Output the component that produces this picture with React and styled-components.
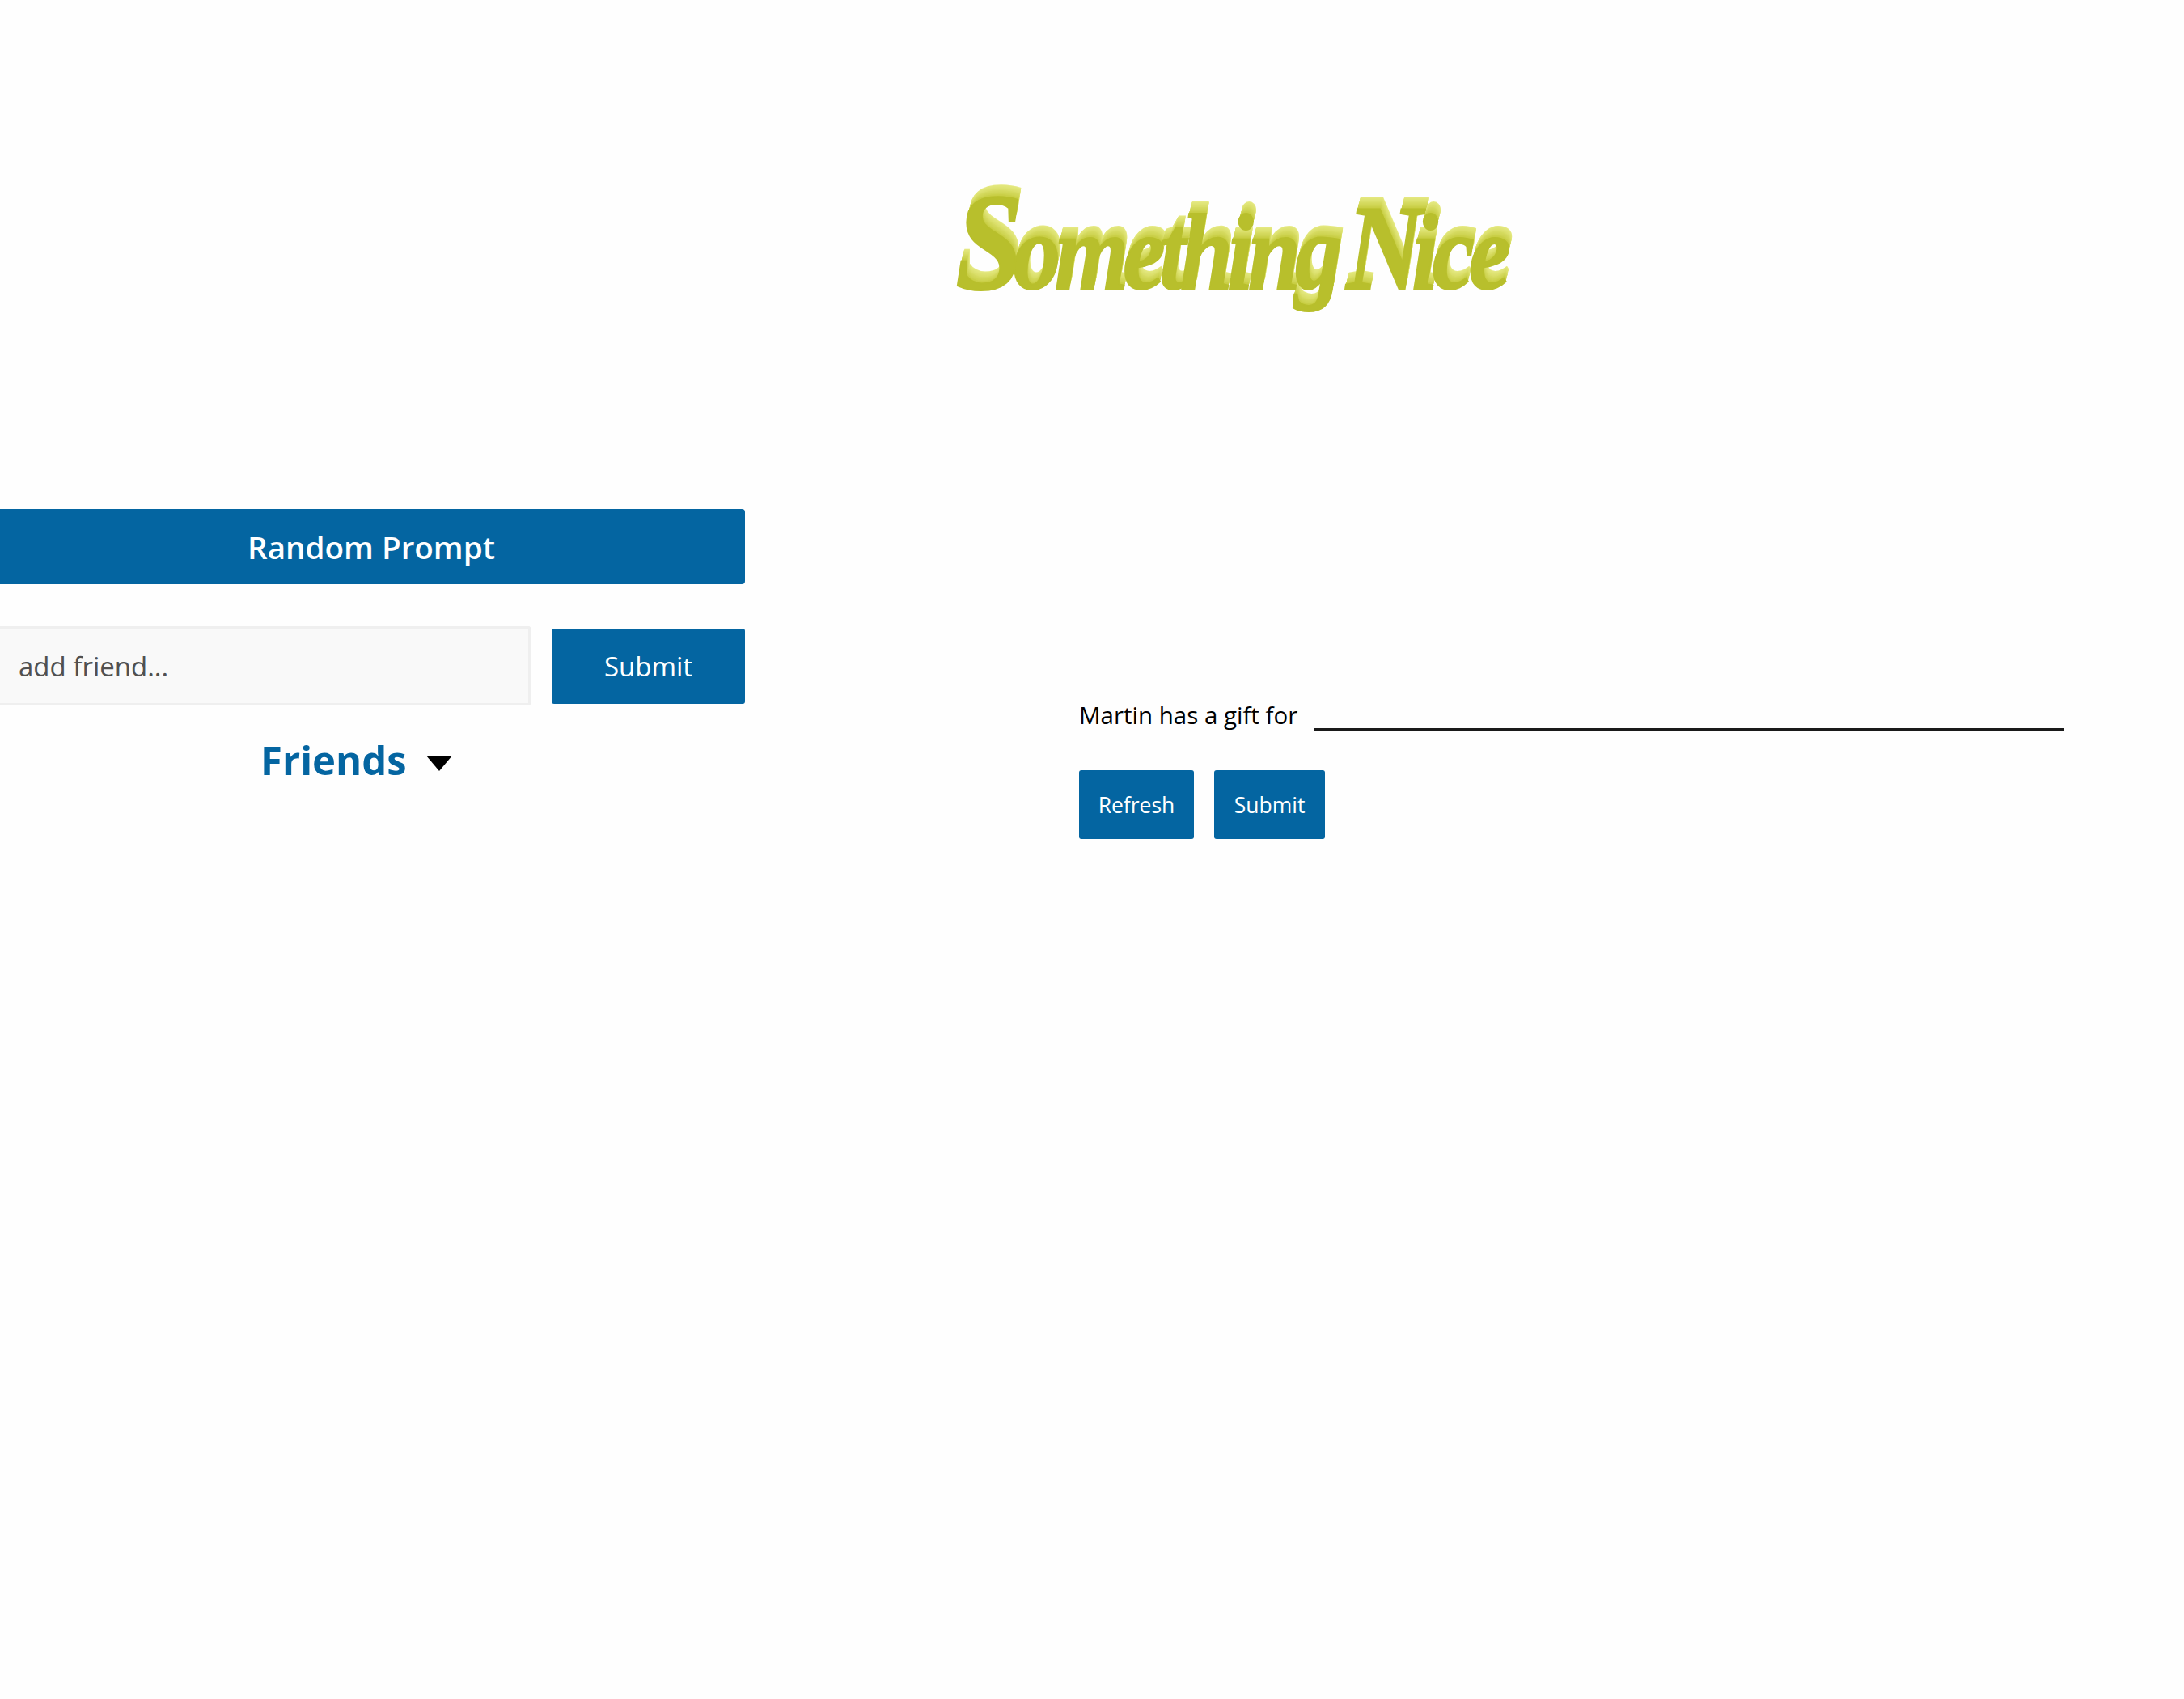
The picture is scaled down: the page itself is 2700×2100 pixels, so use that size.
import React from 'react';
import styled, { createGlobalStyle } from 'styled-components';

const blue = '#0465a1';

const GlobalStyle = createGlobalStyle`
    html, body {
        margin: 0;
        padding: 0;
        background: #fefefe;
        font-family: "Open Sans", "Liberation Sans", sans-serif;
    }
`;

const Page = styled.div`
    width: 2700px;
    height: 2100px;
    overflow: hidden;
    display: flex;
    flex-direction: column;
`;

const Header = styled.header`
    height: 629px;
    display: flex;
    justify-content: flex-start;
    padding: 224px 0 0 1181px;
    box-sizing: border-box;
`;

// stacked shadows give the raised look of the logo, getting lighter towards the top
const extrude = () => {
    const shadows = [];
    for (let i = 1; i <= 18; i++) {
        const t = i / 18;
        const r = Math.round(196 + (230 - 196) * t);
        const g = Math.round(202 + (234 - 202) * t);
        const b = Math.round(60 + (132 - 60) * t);
        shadows.push(`${(i * 0.25).toFixed(2)}px ${(-i * 0.85).toFixed(2)}px 0 rgb(${r}, ${g}, ${b})`);
    }
    return shadows.join(', ');
};

const Logo = styled.h1`
    margin: 0;
    height: 150px;
    font-family: "Liberation Serif", serif;
    font-style: italic;
    font-weight: 700;
    font-size: 134px;
    line-height: 150px;
    letter-spacing: -8px;
    word-spacing: -12px;
    white-space: nowrap;
    color: #b8bf2c;
    -webkit-text-stroke: 2px #b8bf2c;
    text-shadow: ${extrude()};
    transform: scaleX(0.875);
    transform-origin: left center;
`;

const Initial = styled.span`
    font-size: 172px;
    letter-spacing: -14px;
`;

const Capital = styled.span`
    font-size: 150px;
    letter-spacing: -16px;
`;

const Main = styled.main`
    display: grid;
    grid-template-columns: 921px 1fr;
`;

const Sidebar = styled.section`
    display: flex;
    flex-direction: column;
`;

const Button = styled.button`
    border: none;
    border-radius: 3px;
    background: ${blue};
    color: #fff;
    font-family: inherit;
    padding: 0;
    cursor: pointer;
`;

const PromptButton = styled(Button)`
    height: 93px;
    padding-right: 3px;
    border-radius: 0 4px 4px 0;
    font-size: 38.6px;
    font-weight: 600;
`;

const AddRow = styled.form`
    display: flex;
    align-items: center;
    gap: 26px;
    margin-top: 52px;
`;

const FriendInput = styled.input`
    width: 656px;
    height: 98px;
    box-sizing: border-box;
    border: 3px solid #efefef;
    border-left: none;
    border-radius: 0 3px 3px 0;
    background: #f9f9f9;
    padding: 0 0 0 23px;
    font-family: inherit;
    font-size: 33px;

    &::placeholder {
        color: #505050;
        opacity: 1;
    }
`;

const AddButton = styled(Button)`
    width: 239px;
    height: 93px;
    font-size: 33px;
    font-weight: 500;
`;

const FriendsToggle = styled.div`
    display: flex;
    align-items: center;
    gap: 24px;
    margin: 33px 0 0 322px;
    color: ${blue};
    font-size: 49px;
    font-weight: 700;
    line-height: 68px;
`;

const Caret = styled.span`
    width: 0;
    height: 0;
    margin-top: 8px;
    border-left: 16px solid transparent;
    border-right: 16px solid transparent;
    border-top: 19px solid #000;
`;

const PromptPanel = styled.section`
    padding: 231px 148px 0 413px;
`;

const PromptLine = styled.div`
    display: flex;
    align-items: center;
    gap: 20px;
    height: 46px;
    color: #000;
    font-size: 29.5px;
`;

const Blank = styled.span`
    flex: 1;
    height: 3px;
    margin-top: 36px;
    background: #1a1a1a;
`;

const ButtonRow = styled.div`
    display: flex;
    gap: 25px;
    margin-top: 46px;
`;

const FormButton = styled(Button)`
    height: 85px;
    width: ${(props) => props.$width}px;
    font-size: 26.5px;
`;

export default function App() {
    return (
        <Page>
            <GlobalStyle />
            <Header>
                <Logo><Initial>S</Initial>omething <Capital>N</Capital>ice</Logo>
            </Header>
            <Main>
                <Sidebar>
                    <PromptButton>Random Prompt</PromptButton>
                    <AddRow>
                        <FriendInput placeholder="add friend..." />
                        <AddButton type="button">Submit</AddButton>
                    </AddRow>
                    <FriendsToggle>
                        Friends
                        <Caret />
                    </FriendsToggle>
                </Sidebar>
                <PromptPanel>
                    <PromptLine>
                        Martin has a gift for
                        <Blank />
                    </PromptLine>
                    <ButtonRow>
                        <FormButton $width={142}>Refresh</FormButton>
                        <FormButton $width={137}>Submit</FormButton>
                    </ButtonRow>
                </PromptPanel>
            </Main>
        </Page>
    );
}
